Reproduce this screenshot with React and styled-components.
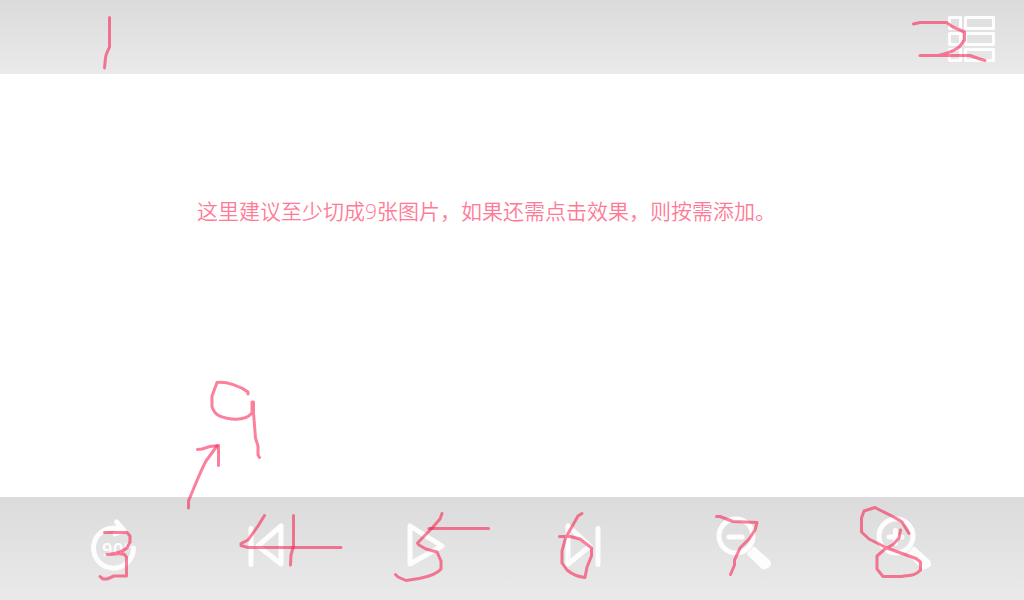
import React from "react";
import styled, { createGlobalStyle } from "styled-components";

const GlobalStyle = createGlobalStyle`
  * { box-sizing: border-box; }
  body {
    margin: 0;
    background: #fff;
    font-family: "Noto Sans", "Noto Sans CJK SC", sans-serif;
  }
`;

const Page = styled.div`
  position: relative;
  display: flex;
  flex-direction: column;
  min-height: 100vh;
  overflow: hidden;
`;

const Bar = styled.div`
  background: linear-gradient(#dbdbdb, #eaeaea);
`;

const TopBar = styled(Bar).attrs({ as: "header" })`
  display: flex;
  justify-content: flex-end;
  padding: 12px 24px 8px;
`;

const Stage = styled.main`
  flex: 1;
  padding: 121px 24px 24px 197px;
`;

const Note = styled.p`
  margin: 0;
  font-family: "Open Sans", "Noto Sans CJK SC", sans-serif;
  font-size: 21px;
  font-weight: 350;
  line-height: 32px;
  color: #ff7a96;
`;

const BottomBar = styled(Bar).attrs({ as: "footer" })`
  display: grid;
  grid-template-columns: repeat(6, 1fr);
  justify-items: center;
  padding: 15px 42px 24px 34px;
`;

const IconButton = styled.button`
  display: block;
  padding: 0;
  border: 0;
  background: none;
  cursor: pointer;
`;

const Icon = styled.svg`
  display: block;
  fill: none;
  stroke: #fdfdfd;
  stroke-width: ${({ $line = 5 }) => $line};
  stroke-linecap: round;
  stroke-linejoin: round;
`;

const Handle = styled.path`
  fill: #fdfdfd;
  stroke-width: 2;
`;

const Degrees = styled.text`
  font-family: "Noto Sans", sans-serif;
  font-size: 18px;
  font-weight: 600;
  fill: #fdfdfd;
  stroke: none;
`;

const Ink = styled.svg`
  position: absolute;
  inset: 0;
  width: 100%;
  height: 100%;
  pointer-events: none;
  fill: none;
  stroke: rgba(250, 20, 70, 0.54);
  stroke-width: 3;
  stroke-linecap: round;
  stroke-linejoin: round;
`;

const inkStrokes = [
  // 1
  "M109.500 17.500V47C108 51 105.500 54 105.500 58L104.500 68",
  // 2
  "M913.500 24L920 22.500H946.500L953 27L964.500 32V40L960 46L957 48.500C950 53 945 54 938 55.500M920 55.500H970L980 59L985 60.500",
  // 3
  "M104.500 532.500H127L130 536V542L127 548C122 552 114 554 107 554.500L117 554H124L126.500 557V576H114L107 579H103L100 576.500",
  // 4
  "M264.500 515.500L258 526L248 540L241 543.500V545.500L248 547.500H341",
  "M293.500 515.500V546L291 555L290.500 565",
  // 5
  "M442 513.500L440 519L433 527L417.500 543L419 545L426 549L437 552L441 561V569C436 575 427 577 419 578.500L406 580.500L398 577L395.500 574.500",
  "M429 528.500H488.500",
  // 6
  "M582 513.500L578 516L565.500 538L562 551V563L567 570C573 575 580 577 585 577.500L587 567L591.500 556V548L580 539L570 536.500H559.500",
  // 7
  "M716.500 516.500L720 516.500L733 521.500L757 522.500L755 530L749 539L740 548L734.500 560V565L730.500 574.500",
  // 8
  "M909 533.500L902 522C893 516 885 513 875 507.500L864 511L861.500 518V532L869 539L887 548L916 558.500L920.500 562V570C914 577 908 575 902 576.500H883L877 569V556L885 549L893 544.500L899 538L900.500 530",
  // 9
  "M248 394V392C240 386 227 381.500 217 382.500L212 396V407C215 415 219 416 226 418C235 420 246 420 252 413V402L253.500 402V413L255.500 438L258 446V455L259.500 457.500",
  // arrow
  "M188.500 508V501C194 488 200 472 206 461L217 446",
  "M197.500 449.500L202 449L210 446.500L218.500 445.500V465.500",
];

const Menu = () => (
  <Icon $line={3} width="54" height="54" viewBox="0 0 54 54">
    {[5.5, 21.5, 37.5].map((y) => (
      <g key={y}>
        <rect x="3.500" y={y} width="11" height="11" />
        <rect x="19.500" y={y} width="28" height="11" />
      </g>
    ))}
  </Icon>
);

const Tool = ({ label, children }) => (
  <IconButton type="button" aria-label={label}>
    <Icon width="64" height="64" viewBox="0 0 64 64">
      {children}
    </Icon>
  </IconButton>
);

const Lens = () => (
  <>
    <circle cx="23" cy="24" r="17" />
    <Handle d="M35 42L41 35.500L56 49Q58 52 56 54T50 56.500Z" />
  </>
);

export default function App() {
  return (
    <>
      <GlobalStyle />
      <Page>
        <TopBar>
          <IconButton type="button" aria-label="列表">
            <Menu />
          </IconButton>
        </TopBar>
        <Stage>
          <Note>这里建议至少切成9张图片，如果还需点击效果，则按需添加。</Note>
        </Stage>
        <BottomBar>
          <Tool label="旋转">
            <path d="M52.500 36A20 20 0 1 1 41 18M35.500 10L43 18.500L34 22" />
            <Degrees x="21 32 43" y="44">90°</Degrees>
          </Tool>
          <Tool label="上一张">
            <path d="M12 16.500V52.500M19 34L42 14V52Z" />
          </Tool>
          <Tool label="播放">
            <path d="M13 14V52L45 34Z" />
          </Tool>
          <Tool label="下一张">
            <path d="M13 14V52L35 34Z M43 16.500V52.500" />
          </Tool>
          <Tool label="缩小">
            <Lens />
            <path d="M16 25H29" />
          </Tool>
          <Tool label="放大">
            <g transform="translate(2 0)">
              <Lens />
              <path d="M16 25H29M22.500 18.500V31.500" />
            </g>
          </Tool>
        </BottomBar>
        <Ink viewBox="0 0 1024 600" aria-hidden="true">
          {inkStrokes.map((d) => (
            <path key={d} d={d} />
          ))}
        </Ink>
      </Page>
    </>
  );
}
